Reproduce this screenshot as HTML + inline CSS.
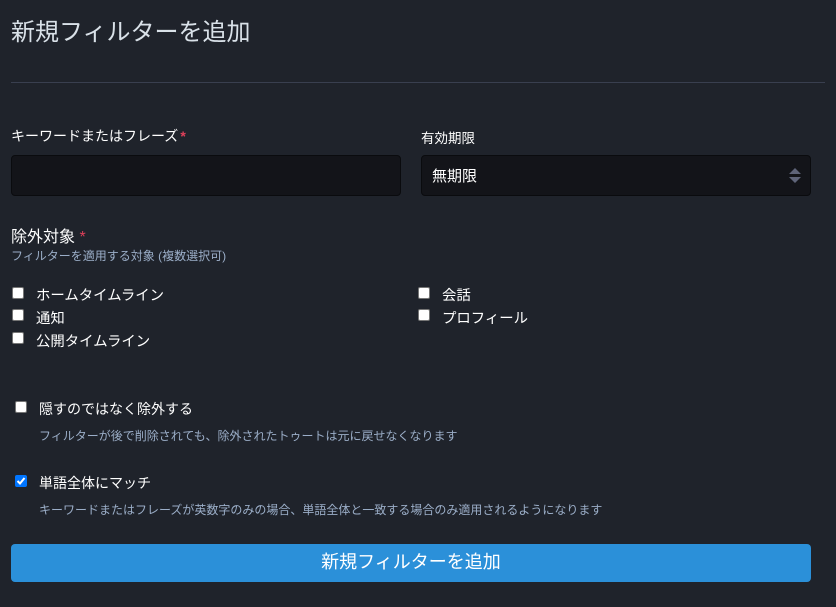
<!DOCTYPE html>
<html><head><meta charset="utf-8"><style>
body{margin:0;width:836px;height:607px;background:#1f232b;overflow:hidden;font-family:"Liberation Sans","Noto Sans CJK JP",sans-serif;color:#fff;position:relative}
.a{position:absolute;white-space:nowrap}
.star{color:#df405a}
.inp{position:absolute;background:#131419;border:1px solid #0a0b0e;border-radius:4px;box-sizing:border-box}
.cb{position:absolute;width:12px;height:12px;background:#fff;border-radius:2px;border:1px solid #767676;box-sizing:border-box}
.hint{color:#9baec8;font-size:12px}
</style></head><body>
<div class="a" style="left:11px;top:12px;font-size:24px;color:#d9e1e8">新規フィルターを追加</div>
<div style="position:absolute;left:11px;top:82px;width:814px;height:1px;background:#393f4f"></div>
<div class="a" style="left:11px;top:126px;font-size:14px">キーワードまたはフレーズ<span class="star" style="margin-left:2px;font-weight:bold">*</span></div>
<div class="inp" style="left:11px;top:155px;width:390px;height:41px"></div>
<div class="a" style="left:421px;top:127px;font-size:13.5px">有効期限</div>
<div class="inp" style="left:421px;top:155px;width:390px;height:41px"></div>
<div class="a" style="left:432px;top:165px;font-size:15px">無期限</div>
<svg style="position:absolute;left:787px;top:167px" width="16" height="18"><path d="M2 7L8 1L14 7Z M2 10L8 16L14 10Z" fill="#5f6479"/></svg>
<div class="a" style="left:11px;top:223px;font-size:16px">除外対象 <span class="star">*</span></div>
<div class="a hint" style="left:11px;top:247px;font-size:12px">フィルターを適用する対象 (複数選択可)</div>
<div class="cb" style="left:12px;top:287px"></div><div class="a" style="left:36px;top:284px;font-size:14.4px">ホームタイムライン</div>
<div class="cb" style="left:12px;top:309px"></div><div class="a" style="left:36px;top:307px;font-size:14.4px">通知</div>
<div class="cb" style="left:12px;top:332px"></div><div class="a" style="left:36px;top:330px;font-size:14.4px">公開タイムライン</div>
<div class="cb" style="left:418px;top:287px"></div><div class="a" style="left:442px;top:284px;font-size:14.4px">会話</div>
<div class="cb" style="left:418px;top:309px"></div><div class="a" style="left:442px;top:307px;font-size:14.4px">プロフィール</div>
<div class="cb" style="left:15px;top:401px"></div><div class="a" style="left:39px;top:399px;font-size:14px">隠すのではなく除外する</div>
<div class="a hint" style="left:39px;top:427px">フィルターが後で削除されても、除外されたトゥートは元に戻せなくなります</div>
<div class="cb" style="left:15px;top:475px;background:#0075ff;border-color:#0075ff"><svg width="10" height="10" style="position:absolute;left:0;top:0"><path d="M1.5 5L4 7.5L8.5 2" stroke="#fff" stroke-width="2" fill="none"/></svg></div>
<div class="a" style="left:39px;top:473px;font-size:14px">単語全体にマッチ</div>
<div class="a hint" style="left:39px;top:501px">キーワードまたはフレーズが英数字のみの場合、単語全体と一致する場合のみ適用されるようになります</div>
<div style="position:absolute;left:11px;top:544px;width:800px;height:38px;background:#2b90d9;border-radius:4px;text-align:center;line-height:37px;font-size:18px">新規フィルターを追加</div>
</body></html>
